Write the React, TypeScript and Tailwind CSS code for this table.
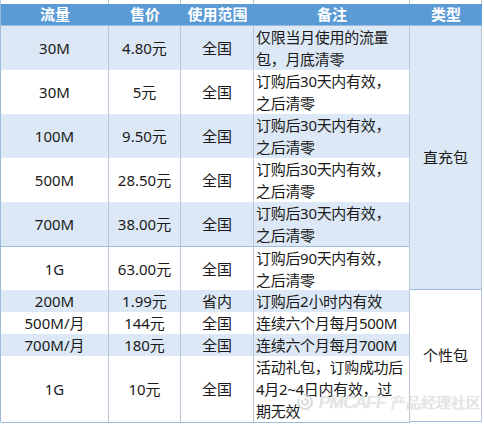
import React from "react";

type Row = {
  flow: string;
  price: string;
  scope: string;
  note: string[];
  h: string;
  blue: boolean;
};

const rows: Row[] = [
  { flow: "30M", price: "4.80元", scope: "全国", note: ["仅限当月使用的流量", "包，月底清零"], h: "h-[44px]", blue: true },
  { flow: "30M", price: "5元", scope: "全国", note: ["订购后30天内有效，", "之后清零"], h: "h-[44px]", blue: false },
  { flow: "100M", price: "9.50元", scope: "全国", note: ["订购后30天内有效，", "之后清零"], h: "h-[44px]", blue: true },
  { flow: "500M", price: "28.50元", scope: "全国", note: ["订购后30天内有效，", "之后清零"], h: "h-[44px]", blue: false },
  { flow: "700M", price: "38.00元", scope: "全国", note: ["订购后30天内有效，", "之后清零"], h: "h-[45px]", blue: true },
  { flow: "1G", price: "63.00元", scope: "全国", note: ["订购后90天内有效，", "之后清零"], h: "h-[43px]", blue: false },
  { flow: "200M", price: "1.99元", scope: "省内", note: ["订购后2小时内有效"], h: "h-[22px]", blue: true },
  { flow: "500M/月", price: "144元", scope: "全国", note: ["连续六个月每月500M"], h: "h-[22px]", blue: false },
  { flow: "700M/月", price: "180元", scope: "全国", note: ["连续六个月每月700M"], h: "h-[22px]", blue: true },
  { flow: "1G", price: "10元", scope: "全国", note: ["活动礼包，订购成功后", "4月2~4日内有效，过", "期无效"], h: "h-[66px]", blue: false },
];

const font = { fontFamily: '"Noto Sans", "Noto Sans CJK SC", sans-serif' };

function Cell({ children, blue, left }: { children: React.ReactNode; blue: boolean; left?: boolean }) {
  return (
    <div
      className={`h-full border-r border-b border-r-[#b8c6d6] border-b-[#9dbbdc] flex items-center ${
        left ? "justify-start pl-[2px]" : "justify-center"
      } ${blue ? "bg-[#dce8f5]" : "bg-white"}`}
    >
      {children}
    </div>
  );
}

export default function App() {
  const sec1 = rows.slice(0, 6);
  const sec2 = rows.slice(6);

  const renderRow = (r: Row, i: number) => (
    <div key={i} className={`grid grid-cols-[108px_72px_73px_156px] ${r.h}`}>
      <Cell blue={r.blue}>{r.flow}</Cell>
      <Cell blue={r.blue}>{r.price}</Cell>
      <Cell blue={r.blue}>{r.scope}</Cell>
      <Cell blue={r.blue} left>
        <div className="leading-[22px] tracking-[-0.3px] whitespace-nowrap">
          {r.note.map((n, k) => (
            <div key={k}>{n}</div>
          ))}
        </div>
      </Cell>
    </div>
  );

  return (
    <div className="relative w-[484px] h-[424px] bg-white overflow-hidden text-[15px] text-[#1a1a1a]" style={font}>
      {/* cut-off row above */}
      <div className="grid grid-cols-[1px_108px_72px_73px_156px_72px] h-[4px]">
        <div className="bg-[#b8c6d6]" />
        <div className="border-r border-[#b8c6d6]" />
        <div className="border-r border-[#b8c6d6]" />
        <div className="border-r border-[#b8c6d6]" />
        <div className="border-r border-[#b8c6d6]" />
        <div className="border-r border-[#b8c6d6]" />
      </div>

      <div className="flex">
        <div className="w-px bg-[#9dbbdc]" />
        <div className="w-[481px]">
          {/* header */}
          <div className="grid grid-cols-[108px_72px_73px_156px_72px] h-[22px] bg-[#5b9bd5] text-white font-bold border-b border-[#9dbbdc]">
            <div className="flex items-center justify-center leading-none">流量</div>
            <div className="flex items-center justify-center leading-none">售价</div>
            <div className="flex items-center justify-center leading-none">使用范围</div>
            <div className="flex items-center justify-center leading-none">备注</div>
            <div className="flex items-center justify-center leading-none">类型</div>
          </div>

          <div className="flex">
            <div>{sec1.map(renderRow)}</div>
            <div className="w-[72px] bg-[#dce8f5] border-r border-b border-r-[#b8c6d6] border-b-[#9dbbdc] flex items-center justify-center">
              直充包
            </div>
          </div>
          <div className="flex">
            <div>{sec2.map(renderRow)}</div>
            <div className="w-[72px] bg-white border-r border-b border-r-[#b8c6d6] border-b-[#9dbbdc] flex items-center justify-center">
              个性包
            </div>
          </div>
        </div>
      </div>

      {/* watermark */}
      <div className="absolute left-[296px] top-[393px] flex items-center gap-[5px] pointer-events-none opacity-80">
        <svg width="18" height="18" viewBox="0 0 18 18" fill="none">
          <path d="M9 2a7 7 0 1 1-6.5 4.4" stroke="#d4d4d4" strokeWidth="2.2" strokeLinecap="round" />
          <path d="M9 6a3 3 0 1 1-2.8 1.9" stroke="#d4d4d4" strokeWidth="2" strokeLinecap="round" />
        </svg>
        <span
          className="text-[17px] italic tracking-[-0.5px] text-[#e2e2e2] leading-none"
          style={{ fontFamily: '"Liberation Sans", Arial, sans-serif', textShadow: "0 0 1px #bdbdbd" }}
        >
          PMCAFF
        </span>
        <span className="text-[15px] text-[#e2e2e2] leading-none" style={{ textShadow: "0 0 1px #bdbdbd" }}>
          产品经理社区
        </span>
      </div>
    </div>
  );
}
